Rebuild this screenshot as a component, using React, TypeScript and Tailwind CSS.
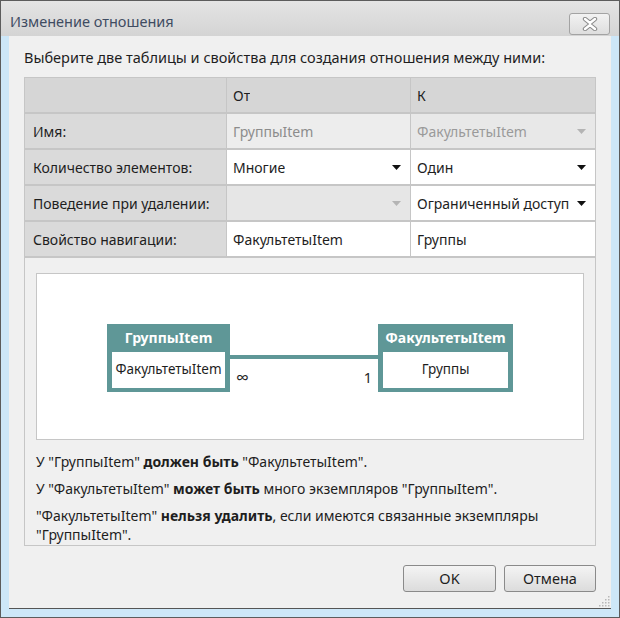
import React from 'react';

const FONT = { fontFamily: '"Noto Sans", "Open Sans", Arial, sans-serif' };

function Arrow({ disabled }: { disabled?: boolean }) {
  return (
    <svg width="9" height="5" viewBox="0 0 9 5" className="shrink-0">
      <path d="M0 0 L9 0 L4.5 5 Z" fill={disabled ? '#b4b4b4' : '#111'} />
    </svg>
  );
}

function Cell({
  children,
  bg = 'bg-white',
  text = 'text-[#1e1e1e]',
  arrow,
}: {
  children?: React.ReactNode;
  bg?: string;
  text?: string;
  arrow?: 'on' | 'off';
}) {
  return (
    <div className={`h-[34px] flex items-center justify-between pl-[6px] pr-[9px] ${bg} ${text}`}>
      <span className="truncate">{children}</span>
      {arrow && <Arrow disabled={arrow === 'off'} />}
    </div>
  );
}

function Label({ children }: { children?: React.ReactNode }) {
  return (
    <div className="h-[34px] flex items-center pl-[8px] bg-[#dadada] text-[#1e1e1e]">{children}</div>
  );
}

function Entity({ title, field, width }: { title: string; field: string; width: string }) {
  return (
    <div className={`${width} bg-[#5f9797] flex flex-col px-[5px] pb-[4px]`}>
      <div className="h-[28px] flex items-center justify-center text-white font-bold text-[14px]">
        {title}
      </div>
      <div className="h-[36px] bg-white flex items-center justify-center text-[13.5px] text-[#1e1e1e]">
        {field}
      </div>
    </div>
  );
}

export default function App() {
  return (
    <div style={FONT} className="w-[620px] h-[618px] border border-[#5c5c5c] bg-[#cde7f8] flex flex-col">
      {/* title bar */}
      <div className="h-[35px] shrink-0 bg-gradient-to-b from-[#e4e4e4] to-[#d4d4d4] flex items-center justify-between pl-[9px] pr-[9px]">
        <span className="text-[14.5px] text-[#3f4c62] pt-[7px]">Изменение отношения</span>
        <div className="w-[41px] h-[22px] mt-[10px] rounded-[3px] border border-[#a3a3a3] bg-gradient-to-b from-[#f2f2f2] to-[#dedede] flex items-center justify-center">
          <svg width="16" height="14" viewBox="0 0 16 14">
            <path
              d="M3 2 L8 6 L13 2 M3 12 L8 8 L13 12"
              stroke="#8a8a8a"
              strokeWidth="4.4"
              strokeLinecap="round"
              strokeLinejoin="round"
              fill="none"
            />
            <path
              d="M3 2 L8 6 L13 2 M3 12 L8 8 L13 12"
              stroke="#ffffff"
              strokeWidth="2.4"
              strokeLinecap="round"
              strokeLinejoin="round"
              fill="none"
            />
          </svg>
        </div>
      </div>

      {/* client area */}
      <div className="flex-1 px-[8px] pb-[8px]">
        <div className="h-full bg-[#f0f0f0] border-b border-[#555] flex flex-col px-[15px] pt-[12px] relative">
          <div className="h-[20px] flex items-center text-[14.5px] text-[#1e1e1e]">
            Выберите две таблицы и свойства для создания отношения между ними:
          </div>

          <div className="mt-[9px] border border-[#c6c6c6] text-[14px]">
            <div className="grid grid-cols-[201px_183px_184px] gap-x-[1px] gap-y-[2px] bg-[#c6c6c6] pb-[2px]">
              <div className="h-[34px] bg-[#d6d6d6]" />
              <Cell bg="bg-[#d6d6d6]">От</Cell>
              <Cell bg="bg-[#d6d6d6]">К</Cell>

              <Label>Имя:</Label>
              <Cell bg="bg-[#ededed]" text="text-[#8c8c8c]">ГруппыItem</Cell>
              <Cell bg="bg-[#e8e8e8]" text="text-[#9a9a9a]" arrow="off">ФакультетыItem</Cell>

              <Label>Количество элементов:</Label>
              <Cell arrow="on">Многие</Cell>
              <Cell arrow="on">Один</Cell>

              <Label>Поведение при удалении:</Label>
              <Cell bg="bg-[#e6e6e6]" arrow="off" />
              <Cell arrow="on">Ограниченный доступ</Cell>

              <Label>Свойство навигации:</Label>
              <Cell>ФакультетыItem</Cell>
              <Cell>Группы</Cell>
            </div>

            <div className="px-[11px] pt-[15px]">
              <div className="h-[167px] bg-white border border-[#c6c6c6] flex items-center justify-center">
                <div className="flex items-start mt-[2px]">
                  <Entity title="ГруппыItem" field="ФакультетыItem" width="w-[123px]" />
                  <div className="w-[148px] flex flex-col pt-[31px]">
                    <div className="h-[4px] bg-[#5f9797]" />
                    <div className="flex justify-between items-end pl-[6px] pr-[6px] pt-[8px] text-[#1e1e1e] leading-[20px]">
                      <span className="text-[18px]">∞</span>
                      <span className="text-[14.5px]">1</span>
                    </div>
                  </div>
                  <Entity title="ФакультетыItem" field="Группы" width="w-[135px]" />
                </div>
              </div>

              <div className="pt-[12px] pb-[1px] text-[14px] text-[#1e1e1e] leading-[20px] flex flex-col gap-[7px]">
                <p>
                  У "ГруппыItem" <b>должен быть</b> "ФакультетыItem".
                </p>
                <p>
                  У "ФакультетыItem" <b>может быть</b> много экземпляров "ГруппыItem".
                </p>
                <p className="leading-[19px]">
                  "ФакультетыItem" <b>нельзя удалить</b>, если имеются связанные экземпляры
                  <br />
                  "ГруппыItem".
                </p>
              </div>
            </div>
          </div>

          <div className="mt-[19px] flex justify-end gap-[8px] text-[14.5px] text-[#1e1e1e]">
            <button className="w-[93px] h-[27px] rounded-[3px] border border-[#8a8a8a] bg-gradient-to-b from-[#f4f4f4] to-[#dcdcdc]">
              OK
            </button>
            <button className="w-[92px] h-[27px] rounded-[3px] border border-[#8a8a8a] bg-gradient-to-b from-[#f4f4f4] to-[#dcdcdc]">
              Отмена
            </button>
          </div>

          {/* resize grip */}
          <svg width="12" height="12" viewBox="0 0 12 12" className="absolute right-[1px] bottom-[1px]">
            {[
              [10, 2],
              [10, 5],
              [7, 5],
              [10, 8],
              [7, 8],
              [4, 8],
              [10, 11],
              [7, 11],
              [4, 11],
              [1, 11],
            ].map(([x, y], i) => (
              <rect key={i} x={x} y={y - 1} width="1.5" height="1.5" fill="#b8b8b8" />
            ))}
          </svg>
        </div>
      </div>
    </div>
  );
}
